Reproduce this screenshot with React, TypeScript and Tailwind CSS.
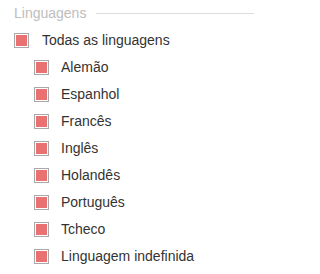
import React from "react";

const langs = ["Alemão", "Espanhol", "Francês", "Inglês", "Holandês", "Português", "Tcheco", "Linguagem indefinida"];

function Box() {
  return (
    <span className="box-border flex h-[15px] w-[15px] shrink-0 items-center justify-center border border-[#a8a8a8] bg-white p-px">
      <span className="block h-full w-full bg-[#e97171]" />
    </span>
  );
}

export default function App() {
  return (
    <div className="h-[274px] w-[254px] bg-white font-['Liberation_Sans',Arial,sans-serif] text-[14px] text-[#333]">
      <div className="flex h-[27px] items-center pl-[14px]">
        <span className="text-[#bdbdbd]">Linguagens</span>
        <span className="ml-[10px] h-px flex-1 bg-[#dcdcdc]" />
      </div>
      <div className="flex h-[27px] items-center gap-[13px] pl-[14px]">
        <Box />
        <span>Todas as linguagens</span>
      </div>
      {langs.map((l) => (
        <div key={l} className="flex h-[27px] items-center gap-[12px] pl-[34px]">
          <Box />
          <span>{l}</span>
        </div>
      ))}
    </div>
  );
}
